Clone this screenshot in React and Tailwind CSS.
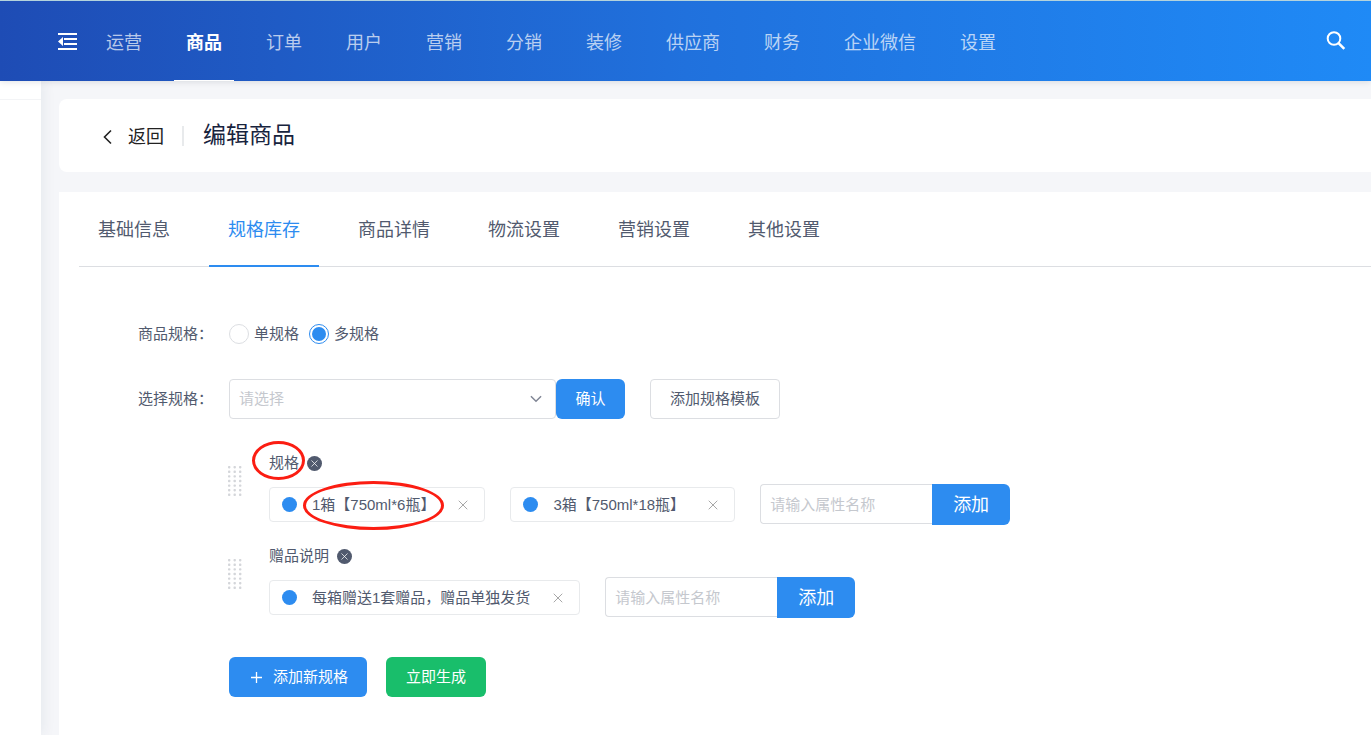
import { useState } from "react";
import { X } from "lucide-react";

const navItems = ["运营", "商品", "订单", "用户", "营销", "分销", "装修", "供应商", "财务", "企业微信", "设置"];
const tabs = ["基础信息", "规格库存", "商品详情", "物流设置", "营销设置", "其他设置"];

const specs = [
    { id: "size", name: "规格", marked: true, values: ["1箱【750ml*6瓶】", "3箱【750ml*18瓶】"] },
    { id: "gift", name: "赠品说明", marked: false, values: ["每箱赠送1套赠品，赠品单独发货"] },
];

function Header() {
    return (
        <header className="relative z-10 flex h-[81px] items-stretch border-t border-[#b4d3dc] bg-linear-to-r from-[#1e4cb5] via-[#2071dd] to-[#1f8af6] shadow-[0_1px_6px_rgba(0,21,41,0.12)]">
            <button aria-label="收起菜单" className="ml-[58px] pt-0.5 text-white">
                <svg width="19" height="18" viewBox="0 0 19 18" fill="currentColor">
                    <path d="M0 0h19v2H0zM6 5h13v2H6zM6 10h13v2H6zM0 15h19v2H0zM5 4v9L0 8.5z" />
                </svg>
            </button>
            <nav className="ml-[17px] flex gap-5">
                {navItems.map((item) => (
                    <a
                        key={item}
                        href="#"
                        className={
                            item === "商品"
                                ? "flex items-center border-b border-white px-3 pt-[5px] text-lg font-bold text-white"
                                : "flex items-center border-b border-transparent px-3 pt-[5px] text-lg text-white/70"
                        }
                    >
                        {item}
                    </a>
                ))}
            </nav>
            <button aria-label="搜索" className="mr-[25px] ml-auto text-white">
                <svg width="20" height="20" viewBox="0 0 20 20" fill="none" stroke="currentColor" strokeWidth="2">
                    <circle cx="8" cy="7.5" r="6.3" />
                    <path d="M12.3 11.8l6 6" strokeWidth="2.6" />
                </svg>
            </button>
        </header>
    );
}

function Grip() {
    return (
        <svg className="mt-[13px] shrink-0" width="14" height="30" viewBox="0 0 14 30" fill="#d4d6da">
            {[0, 1, 2, 3, 4, 5, 6].map((row) =>
                [0, 1, 2].map((col) => (
                    <rect key={row + "-" + col} x={col * 5.5} y={row * 4.6} width="2.4" height="2.4" rx="0.8" />
                ))
            )}
        </svg>
    );
}

function SpecValue({ text, marked }) {
    return (
        <div className="flex h-[35px] items-center rounded border border-[#e8eaec] pr-[13px] pl-3">
            <span className="mr-[15px] size-[15px] rounded-full bg-[#2d8cf0]" />
            <span className="relative whitespace-nowrap">
                {text}
                {marked && (
                    <span className="absolute -inset-x-[9px] -top-[14px] h-[49px] rounded-[50%] border-3 border-[#fb1d12]" />
                )}
            </span>
            <button aria-label={"删除" + text} className="ml-5 text-[#999]">
                <X size={16} strokeWidth={1.3} />
            </button>
        </div>
    );
}

function SpecGroup({ spec }) {
    return (
        <div className="flex gap-[27px]">
            <Grip />
            <div>
                <div className="mb-[11px] flex h-5 items-center gap-2">
                    <label htmlFor={spec.id} className="relative">
                        {spec.name}
                        {spec.marked && (
                            <span className="absolute -top-3 -left-[17px] h-[39px] w-[53px] rounded-[50%] border-3 border-[#fb1d12]" />
                        )}
                    </label>
                    <button aria-label={"删除" + spec.name} className="flex size-[15px] items-center justify-center rounded-full bg-[#515a6e] text-white">
                        <X size={11} strokeWidth={1.6} />
                    </button>
                </div>
                <div className="flex items-center gap-[25px]">
                    {spec.values.map((value, index) => (
                        <SpecValue key={value} text={value} marked={spec.marked && index === 0} />
                    ))}
                    <div className="flex items-start">
                        <input
                            id={spec.id}
                            type="text"
                            placeholder="请输入属性名称"
                            className="h-10 w-[172px] rounded-l border border-r-0 border-[#dcdee2] px-[9px] outline-none placeholder:text-[#c5c8ce]"
                        />
                        <button className="h-[41px] rounded-r-md bg-[#2d8cf0] px-[21px] text-lg text-white">添加</button>
                    </div>
                </div>
            </div>
        </div>
    );
}

function SpecForm() {
    const [mode, setMode] = useState("multi");
    const radioClass =
        "size-5 appearance-none rounded-full border border-[#dcdee2] bg-clip-content p-[2px] checked:border-[#2d8cf0] checked:bg-[#2d8cf0]";
    return (
        <div className="px-[59px] pt-[47px] pb-[38px] text-[15px] leading-5 text-[#515a6e]">
            <div className="mb-[25px] flex h-10 items-center">
                <span className="w-[91px]">商品规格：</span>
                <div className="flex gap-[10px]">
                    <label className="flex items-center gap-[5px]">
                        <input type="radio" name="mode" className={radioClass} checked={mode === "single"} onChange={() => setMode("single")} />
                        单规格
                    </label>
                    <label className="flex items-center gap-[5px]">
                        <input type="radio" name="mode" className={radioClass} checked={mode === "multi"} onChange={() => setMode("multi")} />
                        多规格
                    </label>
                </div>
            </div>
            <div className="mb-[34px] flex items-center">
                <label htmlFor="template" className="w-[91px]">选择规格：</label>
                <div className="relative">
                    <select id="template" defaultValue="" className="h-10 w-[327px] appearance-none rounded border border-[#dcdee2] bg-white px-[9px] text-[#c5c8ce] outline-none">
                        <option value="">请选择</option>
                    </select>
                    <svg className="pointer-events-none absolute top-4 right-[14px]" width="12" height="8" viewBox="0 0 13 8" fill="none" stroke="#808695" strokeWidth="1.6">
                        <path d="M1 1l5.5 5.5L12 1" />
                    </svg>
                </div>
                <button className="h-10 w-[69px] rounded-md bg-[#2d8cf0] text-white">确认</button>
                <button className="ml-[25px] h-10 rounded border border-[#dcdee2] px-[19px]">添加规格模板</button>
            </div>
            <div className="flex flex-col gap-[21px] pl-[90px]">
                {specs.map((spec) => (
                    <SpecGroup key={spec.id} spec={spec} />
                ))}
            </div>
            <div className="mt-[39px] flex gap-[19px] pl-[91px] text-white">
                <button className="flex h-10 items-center rounded-md bg-[#2d8cf0] pr-[19px] pl-[22px]">
                    <svg className="mr-[11px]" width="11" height="11" viewBox="0 0 11 11" stroke="currentColor" strokeWidth="1.3">
                        <path d="M5.5 0v11M0 5.5h11" />
                    </svg>
                    添加新规格
                </button>
                <button className="h-10 rounded-md bg-[#19be6b] px-5">立即生成</button>
            </div>
        </div>
    );
}

export default function App() {
    const [tab, setTab] = useState("规格库存");
    return (
        <div className="flex min-h-screen flex-col overflow-x-hidden bg-[#f5f6f9] font-['Liberation_Sans','Noto_Sans_CJK_SC',sans-serif]">
            <Header />
            <div className="flex flex-1">
                <aside className="w-[41px] shrink-0 bg-white shadow-[2px_0_14px_rgba(0,60,90,0.07)]">
                    <div className="h-[19px] border-b border-[#f3f4f6]" />
                </aside>
                <main className="flex min-w-0 flex-1 flex-col gap-5 pt-[18px] pl-[18px]">
                    <div className="flex h-[73px] items-center rounded-l-lg bg-white pl-[44px]">
                        <button className="flex items-center gap-4 pt-0.5 text-lg text-[#222]">
                            <svg width="9" height="16" viewBox="0 0 9 16" fill="none" stroke="currentColor" strokeWidth="1.6">
                                <path d="M8 1.5L1.5 8L8 14.5" />
                            </svg>
                            返回
                        </button>
                        <span className="mr-[19px] ml-[18px] h-5 w-[2px] bg-[#e8eaec]" />
                        <h1 className="text-[23px] text-[#17233d]">编辑商品</h1>
                    </div>
                    <section className="flex-1 bg-white pl-5">
                        <div role="tablist" className="flex h-[75px] gap-5 border-b border-[#dcdee2]">
                            {tabs.map((name) => (
                                <button
                                    key={name}
                                    role="tab"
                                    aria-selected={tab === name}
                                    onClick={() => setTab(name)}
                                    className={
                                        tab === name
                                            ? "-mb-px border-b-2 border-[#2d8cf0] px-[19px] pt-0.5 text-lg text-[#2d8cf0]"
                                            : "-mb-px border-b-2 border-transparent px-[19px] pt-0.5 text-lg text-[#515a6e]"
                                    }
                                >
                                    {name}
                                </button>
                            ))}
                        </div>
                        <SpecForm />
                    </section>
                </main>
            </div>
        </div>
    );
}
